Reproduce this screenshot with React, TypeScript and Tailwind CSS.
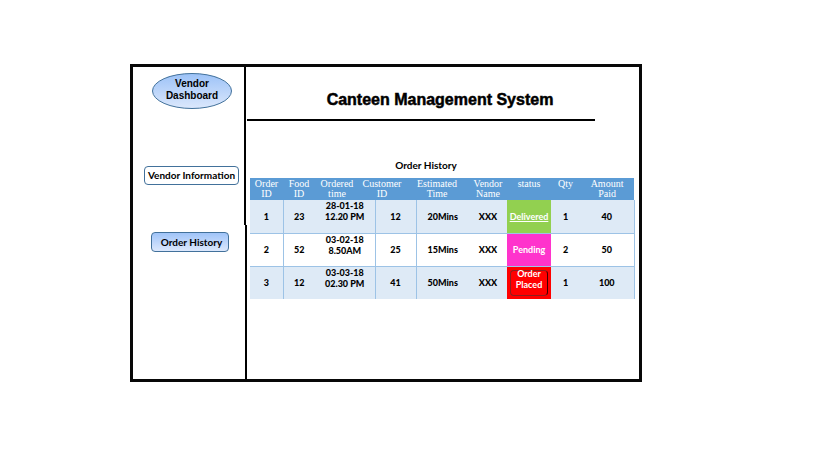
import React from "react";

type Order = {
  id: number;
  food: number;
  date: string;
  time: string;
  customer: number;
  estimate: string;
  vendor: string;
  status: string;
  statusClass: string;
  qty: number;
  paid: number;
};

const orders: Order[] = [
  { id: 1, food: 23, date: "28-01-18", time: "12.20 PM", customer: 12, estimate: "20Mins", vendor: "XXX", status: "Delivered", statusClass: "bg-[#92d050]", qty: 1, paid: 40 },
  { id: 2, food: 52, date: "03-02-18", time: "8.50AM", customer: 25, estimate: "15Mins", vendor: "XXX", status: "Pending", statusClass: "bg-[#ff33cc]", qty: 2, paid: 50 },
  { id: 3, food: 12, date: "03-03-18", time: "02.30 PM", customer: 41, estimate: "50Mins", vendor: "XXX", status: "Order Placed", statusClass: "bg-[#ff0000]", qty: 1, paid: 100 },
];

const columns = ["w-[33px]", "w-[32px]", "w-[44px]", "w-[16px]", "w-[30px]", "w-[11px]", "w-[53px]", "w-[38px]", "w-[44px]", "w-[29px]", "w-[54px]"];

const headings = [
  { lines: ["Order", "ID"], span: 1 },
  { lines: ["Food", "ID"], span: 1 },
  { lines: ["Ordered", "time"], span: 1 },
  { lines: ["Customer", "ID"], span: 2 },
  { lines: ["Estimated", "Time"], span: 2 },
  { lines: ["Vendor", "Name"], span: 1 },
  { lines: ["status"], span: 1 },
  { lines: ["Qty"], span: 1 },
  { lines: ["Amount", "Paid"], span: 1 },
];

function Status({ order }: { order: Order }) {
  if (order.status === "Delivered") {
    return <a href="#delivered" className="underline">{order.status}</a>;
  }
  if (order.status === "Pending") {
    return <span>{order.status}</span>;
  }
  return (
    <button type="button" className="mx-auto block h-[26px] w-[38px] rounded border border-[#8c2020] border-r-[#400000] leading-[11px]">
      <span className="-mt-2 block">Order<br />Placed</span>
    </button>
  );
}

export default function App() {
  return (
    <div className="min-h-screen bg-white pt-[64px] pr-[177px] pb-[77px] pl-[130px] font-['Lato','Liberation_Sans',sans-serif] text-black">
      <div className="flex min-h-[318px] min-w-[512px] border-[3px] border-[#080808]">
        <aside className="flex w-[114px] shrink-0">
          <nav className="flex flex-1 flex-col items-center pt-[6px] pl-1.5">
            <svg viewBox="0 0 80 36" className="h-[36px] w-[80px]" role="img" aria-label="Vendor Dashboard">
              <defs>
                <linearGradient id="oval" x1="0" y1="0" x2="0" y2="1">
                  <stop offset="0" stopColor="#9cc2f7" />
                  <stop offset="1" stopColor="#dce8fc" />
                </linearGradient>
              </defs>
              <ellipse cx="40" cy="18" rx="39.5" ry="17.5" fill="url(#oval)" stroke="#42719b" />
              <g textAnchor="middle" className="font-['Liberation_Sans',sans-serif] text-[10px] font-bold">
                <text x="40" y="14">Vendor</text>
                <text x="40" y="26">Dashboard</text>
              </g>
            </svg>
            <button type="button" className="mt-[57px] h-[19px] w-[95px] rounded-[4px] border border-[#42719b] bg-white text-[10px] leading-[17px] font-bold whitespace-nowrap">
              Vendor Information
            </button>
            <button type="button" className="mt-[47px] mr-1 h-[20px] w-[78px] rounded-[4px] border border-[#42719b] bg-linear-to-b from-[#a0c4f8] to-[#dce8fc] pl-1 text-[10px] leading-[18px] font-bold whitespace-nowrap">
              Order History
            </button>
          </nav>
          <div className="flex w-[3px] flex-col">
            <div className="h-[158px] w-[2px] bg-black" />
            <div className="w-[2px] flex-1 self-end bg-black" />
          </div>
        </aside>
        <main className="min-w-0 flex-1 pr-[5px] pl-[3px]">
          <header className="-ml-[3px] mr-[39px] flex h-[54px] items-center justify-center border-b-2 border-black pt-[14px] pl-[38px]">
            <h1 className="font-['Liberation_Sans',sans-serif] text-[16px] leading-[18px] font-black whitespace-nowrap [-webkit-text-stroke:0.5px_black]">
              Canteen Management System
            </h1>
          </header>
          <h2 className="mt-[37px] mr-[32px] text-center text-[10px] leading-[14px] font-bold">Order History</h2>
          <table className="mt-[6px] w-full table-fixed border-collapse text-center text-[9px] font-black">
            <colgroup>
              {columns.map((width, i) => <col key={i} className={width} />)}
            </colgroup>
            <thead>
              <tr className="h-[22px] bg-[#5b9bd5] align-top font-['Liberation_Serif',serif] text-[10px] leading-[10px] text-white">
                {headings.map(({ lines, span }) => (
                  <th key={lines[0]} colSpan={span} scope="col" className="p-0 pt-px font-normal">
                    {lines.map((line) => <span key={line} className="block">{line}</span>)}
                  </th>
                ))}
              </tr>
            </thead>
            <tbody>
              {orders.map((order) => (
                <tr key={order.id} className="h-[33px] border-b border-[#9dc3e6] leading-[11px] whitespace-nowrap odd:bg-[#deeaf6] last:border-b-0">
                  <td className="border-r border-[#9dc3e6] p-0">{order.id}</td>
                  <td className="p-0">{order.food}</td>
                  <td colSpan={2} className="border-r border-[#9dc3e6] p-0 align-top">{order.date}<br />{order.time}</td>
                  <td colSpan={2} className="border-r border-[#9dc3e6] p-0">{order.customer}</td>
                  <td className="p-0">{order.estimate}</td>
                  <td className="p-0">{order.vendor}</td>
                  <td className={`p-0 text-white ${order.statusClass} font-bold`}><Status order={order} /></td>
                  <td className="p-0">{order.qty}</td>
                  <td className="border-r border-[#9dc3e6] p-0">{order.paid}</td>
                </tr>
              ))}
            </tbody>
          </table>
        </main>
      </div>
    </div>
  );
}
